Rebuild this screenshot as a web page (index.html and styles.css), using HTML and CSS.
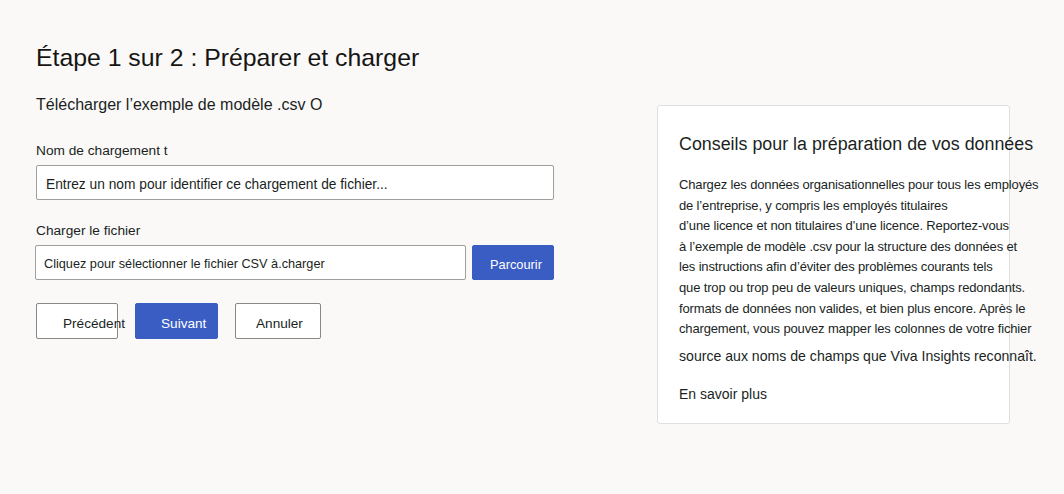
FILE: index.html
```html
<!DOCTYPE html>
<html lang="fr">
<head>
<meta charset="utf-8">
<title>Étape 1 sur 2</title>
<link rel="stylesheet" href="styles.css">
</head>
<body>
<div class="page">
  <main class="left">
    <h1 class="title">Étape 1 sur 2 : Préparer et charger</h1>
    <p class="subtitle">Télécharger l’exemple de modèle .csv O</p>
    <label class="label label-name">Nom de chargement t</label>
    <div class="input input-name">Entrez un nom pour identifier ce chargement de fichier...</div>
    <label class="label label-file">Charger le fichier</label>
    <div class="file-row">
      <div class="input input-file">Cliquez pour sélectionner le fichier CSV à.charger</div>
      <button class="btn btn-primary btn-browse">Parcourir</button>
    </div>
    <div class="actions">
      <button class="btn btn-default btn-prev">Précédent</button>
      <button class="btn btn-primary btn-next">Suivant</button>
      <button class="btn btn-default btn-cancel">Annuler</button>
    </div>
  </main>
  <aside class="card">
    <h2 class="card-title">Conseils pour la préparation de vos données</h2>
    <p class="card-text">Chargez les données organisationnelles pour tous les employés<br>de l’entreprise, y compris les employés titulaires<br>d’une licence et non titulaires d’une licence. Reportez-vous<br>à l’exemple de modèle .csv pour la structure des données et<br>les instructions afin d’éviter des problèmes courants tels<br>que trop ou trop peu de valeurs uniques, champs redondants.<br>formats de données non valides, et bien plus encore. Après le<br>chargement, vous pouvez mapper les colonnes de votre fichier<span class="last-line">source aux noms de champs que Viva Insights reconnaît.</span></p>
    <p class="card-link">En savoir plus</p>
  </aside>
</div>
</body>
</html>
```

FILE: styles.css
```css
html, body {
  margin: 0;
  padding: 0;
  background: #faf9f8;
  font-family: "Liberation Sans", Arial, sans-serif;
  color: #201f1e;
}

.page {
  display: flex;
  align-items: flex-start;
  padding: 42px 0 0 36px;
}

.left {
  width: 518px;
  flex: none;
}

.title {
  margin: 0;
  font-size: 24.8px;
  font-weight: 400;
  line-height: 32px;
  color: #161514;
}

.subtitle {
  margin: 20px 0 0;
  font-size: 16px;
  line-height: 22px;
}

.label {
  display: block;
  font-size: 13.7px;
  line-height: 18px;
}

.label-name {
  margin-top: 26px;
}

.label-file {
  margin-top: 22px;
}

.input {
  box-sizing: border-box;
  height: 35px;
  background: #fff;
  border: 1px solid #a19f9d;
  border-radius: 2px;
  white-space: nowrap;
}

.input-name {
  width: 518px;
  margin-top: 5px;
  padding: 5px 0 0 9px;
  font-size: 13.75px;
  line-height: 28px;
}

.file-row {
  display: flex;
  gap: 6px;
  margin-top: 5px;
}

.input-file {
  width: 431px;
  margin-left: -1px;
  padding: 3px 0 0 8px;
  font-size: 12.7px;
  line-height: 30px;
}

.btn {
  box-sizing: border-box;
  height: 36px;
  padding: 4px 0 0;
  border-radius: 2px;
  font-family: inherit;
  font-size: 13.6px;
  text-align: left;
  white-space: nowrap;
  overflow: visible;
  cursor: pointer;
}

.btn-primary {
  background: #3a5dc4;
  border: 1px solid #3a5dc4;
  color: #fff;
}

.btn-default {
  background: #fff;
  border: 1px solid #8a8886;
  color: #201f1e;
}

.btn-browse {
  width: 82px;
  height: 35px;
  padding: 3px 0 0 17px;
  font-size: 12.8px;
}

.actions {
  display: flex;
  margin-top: 23px;
}

.btn-prev {
  width: 82px;
  padding-left: 26px;
}

.btn-next {
  width: 83px;
  margin-left: 17px;
  padding-left: 25px;
}

.btn-cancel {
  width: 86px;
  margin-left: 17px;
  padding-left: 20px;
}

.card {
  box-sizing: border-box;
  width: 353px;
  height: 319px;
  margin: 63px 0 0 103px;
  padding: 26px 0 0 21px;
  background: #fff;
  border: 1px solid #e1dfdd;
  border-radius: 3px;
  flex: none;
}

.card-title {
  margin: 0;
  font-size: 17.85px;
  font-weight: 400;
  line-height: 24px;
  white-space: nowrap;
}

.card-text {
  margin: 19px 0 0;
  font-size: 13px;
  line-height: 20.6px;
  letter-spacing: -0.15px;
  white-space: nowrap;
}

.last-line {
  display: block;
  margin-top: 6px;
  font-size: 14.1px;
  letter-spacing: 0;
}

.card-link {
  margin: 19px 0 0;
  font-size: 14px;
  line-height: 18px;
}
```
